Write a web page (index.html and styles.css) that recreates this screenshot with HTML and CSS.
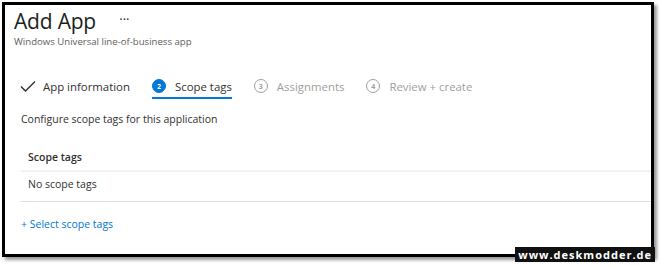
FILE: index.html
```html
<!DOCTYPE html>
<html lang="en">
<head>
    <meta charset="UTF-8">
    <title>Add App</title>
    <link rel="stylesheet" href="styles.css">
</head>
<body>
<div class="frame">
    <div class="page-head">
        <h1>Add App <span class="more">&middot;&middot;&middot;</span></h1>
        <p class="subtitle">Windows Universal line-of-business app</p>
    </div>

    <div class="steps">
        <div class="step done">
            <svg class="check" width="16" height="12" viewBox="0 0 16 12"><path d="M1 6.5 L5.5 11 L15 1.5" fill="none" stroke="#323130" stroke-width="1.4"/></svg>
            <span>App information</span>
        </div>
        <div class="step active">
            <span class="num">2</span>
            <span>Scope tags</span>
        </div>
        <div class="step">
            <span class="num">3</span>
            <span>Assignments</span>
        </div>
        <div class="step">
            <span class="num">4</span>
            <span>Review + create</span>
        </div>
    </div>

    <p class="intro">Configure scope tags for this application</p>

    <div class="tags-table">
        <div class="tags-row tags-head">Scope tags</div>
        <div class="tags-row tags-empty">No scope tags</div>
    </div>

    <a class="select-link" href="#">+ Select scope tags</a>
</div>
<div class="watermark">www.deskmodder.de</div>
</body>
</html>
```

FILE: styles.css
```css
body {
    margin: 0;
    background: #fff;
    font-family: "Open Sans", "Noto Sans", sans-serif;
    color: #323130;
    width: 661px;
    height: 266px;
    overflow: hidden;
    position: relative;
}
.frame {
    margin: 2px 0 0 2px;
    width: 646px;
    height: 249px;
    border: 3px solid #000;
    box-shadow: 3px 3px 3px #9a9a9a;
    overflow: hidden;
}
.page-head {
    padding: 0 0 0 9px;
}
.page-head h1 {
    margin: 0;
    font-size: 21px;
    font-weight: 400;
    line-height: 28px;
    color: #201f1e;
    letter-spacing: -0.2px;
}
.more {
    font-size: 13px;
    margin-left: 18px;
    vertical-align: 5px;
    letter-spacing: 0;
}
.subtitle {
    margin: 0;
    font-size: 9.6px;
    color: #605e5c;
    line-height: 14px;
}
.steps {
    display: flex;
    margin: 26px 0 0 14px;
    gap: 22px;
    font-size: 11.4px;
}
.step {
    display: flex;
    align-items: center;
    gap: 9px;
    height: 22px;
    padding-bottom: 2px;
    color: #a19f9d;
}
.step.done,
.step.active {
    color: #323130;
}
.step.done {
    gap: 7px;
    padding-left: 1px;
}
.step.active {
    border-bottom: 2px solid #0078d4;
    padding-bottom: 0;
}
.num {
    width: 12px;
    height: 12px;
    border: 1px solid #a19f9d;
    border-radius: 50%;
    font-size: 7px;
    font-weight: 700;
    display: flex;
    align-items: center;
    justify-content: center;
}
.step.active .num {
    background: #0078d4;
    border-color: #0078d4;
    color: #fff;
}
.intro {
    margin: 12px 0 0 16px;
    font-size: 10.5px;
    line-height: 16px;
}
.tags-table {
    margin: 17px 0 0 16px;
    font-size: 10.5px;
}
.tags-row {
    padding: 0 0 0 7px;
}
.tags-head {
    font-weight: 600;
    height: 26px;
    line-height: 26px;
    border-bottom: 2px solid #f3f2f1;
}
.tags-empty {
    height: 24px;
    line-height: 24px;
    padding-bottom: 5px;
    border-bottom: 1px solid #e1dfdd;
}
.select-link {
    display: block;
    margin: 14px 0 0 16px;
    font-size: 10.5px;
    line-height: 16px;
    color: #0078d4;
    text-decoration: none;
}
.watermark {
    position: absolute;
    right: 6px;
    bottom: 4px;
    font-size: 11px;
    font-weight: 700;
    color: #fff;
    background: #111;
    padding: 0 3px;
    letter-spacing: 1px;
}
```
